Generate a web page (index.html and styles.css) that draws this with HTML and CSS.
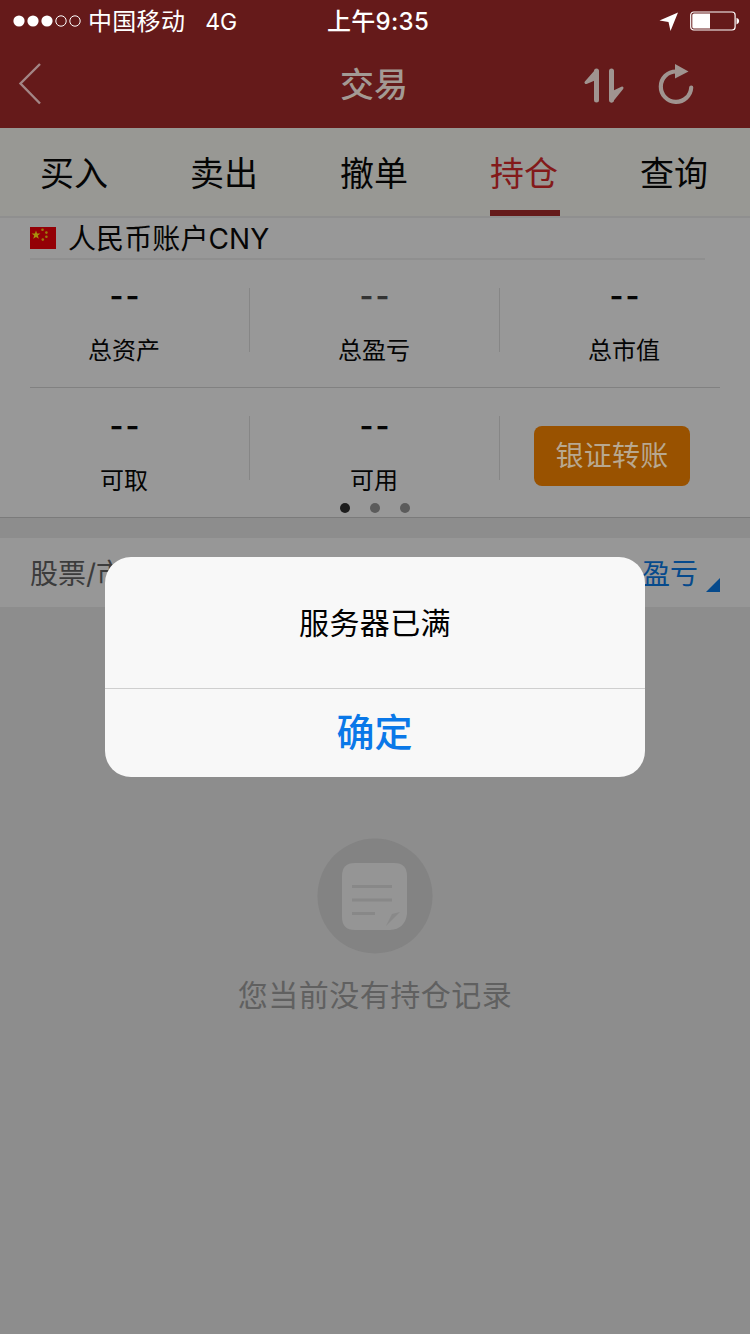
FILE: index.html
```
<!doctype html>
<html lang="zh-CN">
<head>
<meta charset="utf-8">
<meta name="viewport" content="width=device-width, initial-scale=1.0">
<title>交易</title>
<link rel="stylesheet" href="styles.css">
</head>
<body>
<div class="page">
    <header class="header">
        <div class="status">
            <div class="status-left">
                <svg width="68" height="12" viewBox="0 0 68 12">
                    <g fill="#fff"><circle cx="6" cy="6" r="5.6"/><circle cx="20" cy="6" r="5.6"/><circle cx="34" cy="6" r="5.6"/></g>
                    <g fill="none" stroke="#fff"><circle cx="48" cy="6" r="5.2"/><circle cx="62" cy="6" r="5.2"/></g>
                </svg>
                <span class="carrier">中国移动</span>
                <span class="network">4G</span>
            </div>
            <div class="status-time">上午9:35</div>
            <div class="status-right">
                <svg width="20" height="20" viewBox="0 0 20 20"><path d="M19 1.5 L0.5 9.5 L9.5 11 L11.5 20 Z" fill="#fff"/></svg>
                <svg width="50" height="20" viewBox="0 0 50 20">
                    <rect x="0.7" y="1" width="44.4" height="18" rx="3" fill="none" stroke="#fff" stroke-width="1.2"/>
                    <path d="M4 2.5 H20 V17.5 H4 Q2.3 17.5 2.3 16 V4 Q2.3 2.5 4 2.5 Z" fill="#fff"/>
                    <path d="M46.5 6.7 Q49.2 7.6 49.2 10 Q49.2 12.6 46.5 13.5 Z" fill="#fff"/>
                </svg>
            </div>
        </div>
        <div class="nav">
            <svg class="back" width="24" height="44" viewBox="0 0 24 44"><path d="M22 2 L2.5 21.5 L22 41.5" fill="none" stroke="#a38686" stroke-width="2.4"/></svg>
            <h1>交易</h1>
            <div class="nav-right">
                <svg class="swap" width="42" height="38" viewBox="0 0 42 38" fill="#a09490" stroke="#a09490" stroke-linecap="round" stroke-linejoin="round">
                    <path d="M13.5 33 V4" stroke-width="5"/>
                    <path d="M13.5 3.5 L3 15.5 L13.5 11 Z" stroke-width="3"/>
                    <path d="M28.5 4 V33" stroke-width="5"/>
                    <path d="M28.5 34 L39 21 L28.5 26 Z" stroke-width="3"/>
                </svg>
                <svg width="38" height="42" viewBox="0 0 38 42">
                    <path d="M19 8.5 A15.2 15.2 0 1 0 34.2 24.5" fill="none" stroke="#a09490" stroke-width="4.2" stroke-linecap="round"/>
                    <path d="M18 1 L31.5 8.5 L18 15.5 Z" fill="#a09490"/>
                </svg>
            </div>
        </div>
    </header>

    <nav class="tabs">
        <a>买入</a>
        <a>卖出</a>
        <a>撤单</a>
        <a class="active">持仓</a>
        <a>查询</a>
    </nav>

    <section class="account">
        <div class="account-name">
            <svg width="26" height="22" viewBox="0 0 26 22">
                <rect width="26" height="22" fill="#940006"/>
                <path d="M6 3.4 L7.1 6.6 H10.4 L7.8 8.6 L8.8 11.8 L6 9.9 L3.2 11.8 L4.2 8.6 L1.6 6.6 H4.9 Z" fill="#a8900c"/>
                <g fill="#9c7a0c"><circle cx="12.5" cy="2.8" r="1.3"/><circle cx="16.4" cy="5.6" r="1.3"/><circle cx="16.4" cy="9.8" r="1.3"/><circle cx="12.8" cy="12.6" r="1.3"/></g>
            </svg>
            <span>人民币账户CNY</span>
        </div>
        <div class="row">
            <div class="cell"><b>--</b><span>总资产</span></div>
            <div class="cell"><b class="dim">--</b><span>总盈亏</span></div>
            <div class="cell"><b>--</b><span>总市值</span></div>
        </div>
        <div class="row">
            <div class="cell"><b>--</b><span>可取</span></div>
            <div class="cell"><b>--</b><span>可用</span></div>
            <div class="cell"><a class="transfer">银证转账</a></div>
        </div>
        <div class="dots"><i class="on"></i><i></i><i></i></div>
    </section>

    <section class="list-head">
        <span>股票/市值</span>
        <span class="sort">盈亏<svg width="14" height="14" viewBox="0 0 14 14"><path d="M14 0 V14 H0 Z" fill="#064a8c"/></svg></span>
    </section>

    <section class="empty">
        <svg width="116" height="116" viewBox="0 0 116 116">
            <circle cx="58" cy="58" r="57.5" fill="#838383"/>
            <path d="M38 25 H77 Q90 25 90 38 V76 Q88 91 73 92 H38 Q25 92 25 79 V38 Q25 25 38 25 Z" fill="#959595"/>
            <path d="M35 48.5 H75 M35 62 H75 M35 75.5 H58" stroke="#888" stroke-width="3"/>
            <path d="M69 88 L75 76 L83 74 Z" fill="#898989"/>
        </svg>
        <p>您当前没有持仓记录</p>
    </section>
</div>

<div class="alert">
    <div class="alert-msg">服务器已满</div>
    <div class="alert-btn">确定</div>
</div>
</body>
</html>
```

FILE: styles.css
```
* {
    box-sizing: border-box;
}
body {
    margin: 0;
    width: 750px;
    height: 1334px;
    overflow: hidden;
    position: relative;
    background: #8d8d8d;
    color: #050505;
    font-family: Inter, "Noto Sans CJK SC", sans-serif;
}
svg {
    display: block;
    flex: none;
}
.header {
    height: 128px;
    background: #651a1a;
}
.status {
    height: 40px;
    display: grid;
    grid-template-columns: 1fr 110px 1fr;
    align-items: center;
    color: #fff;
    font-size: 24px;
    line-height: 40px;
}
.status-left {
    display: flex;
    align-items: center;
    padding-left: 13px;
}
.carrier {
    margin-left: 7px;
    padding-top: 2px;
    letter-spacing: 0.3px;
}
.network {
    margin-left: 20px;
    padding-top: 2px;
    font-size: 23px;
}
.status-time {
    padding: 2px 0 0 6px;
    font-weight: 500;
    letter-spacing: 0.3px;
    white-space: nowrap;
    text-align: center;
}
.status-right {
    display: flex;
    justify-content: flex-end;
    gap: 11px;
    padding-right: 10px;
}
.nav {
    height: 88px;
    display: grid;
    grid-template-columns: 1fr 100px 1fr;
    align-items: center;
}
.back {
    margin: 0 0 1px 18px;
}
.nav h1 {
    margin: 2px 2px 0 0;
    font-size: 34px;
    font-weight: 500;
    line-height: 50px;
    text-align: center;
    color: #a39a94;
}
.nav-right {
    display: flex;
    justify-content: flex-end;
    align-items: center;
    gap: 32px;
    padding-right: 55px;
}
.swap {
    margin-top: 4px;
}
.tabs {
    height: 90px;
    display: flex;
    background: #989894;
    border-bottom: 2px solid #8f8f8f;
}
.tabs a {
    width: 70px;
    margin: 0 40px;
    padding-right: 2px;
    font-size: 34px;
    line-height: 91px;
    text-align: center;
    white-space: nowrap;
}
.tabs .active {
    height: 88px;
    color: #831a1a;
    border-bottom: 6px solid #651a1a;
}
.account {
    position: relative;
    height: 300px;
    background: #989898;
    border-bottom: 1px solid #7b7b7b;
}
.account-name {
    height: 42px;
    margin: 0 45px 0 30px;
    display: flex;
    align-items: center;
    gap: 12px;
    font-size: 28px;
    line-height: 40px;
    border-bottom: 2px solid #8f8f8f;
}
.account-name span {
    padding-top: 2px;
    letter-spacing: 0.1px;
}
.row {
    height: 128px;
    display: flex;
}
.row + .row {
    height: 130px;
}
.row:nth-child(2) {
    background: linear-gradient(#818181, #818181) 30px 100% / 690px 1px no-repeat;
}
.cell {
    width: 250px;
    display: flex;
    flex-direction: column;
    align-items: center;
    background: linear-gradient(#868686, #868686) 100% 28px / 1px 64px no-repeat;
}
.cell:last-child {
    background: none;
}
.cell b {
    margin-top: 21px;
    padding-left: 1px;
    height: 30px;
    font-size: 30px;
    font-weight: 600;
    line-height: 30px;
    letter-spacing: 2px;
}
.row + .row b {
    margin-top: 23px;
}
.cell .dim {
    color: #333;
}
.cell span {
    margin: 22px 2px 0 0;
    font-size: 24px;
    line-height: 36px;
}
.transfer {
    width: 156px;
    height: 60px;
    margin: 38px 0 0 -26px;
    border-radius: 8px;
    background: #995200;
    color: #b8a890;
    font-size: 28px;
    line-height: 61px;
    letter-spacing: 0.2px;
    text-align: center;
}
.dots {
    position: absolute;
    left: 340px;
    top: 285px;
    display: flex;
    gap: 20px;
}
.dots i {
    width: 10px;
    height: 10px;
    border-radius: 50%;
    background: #5b5b5b;
}
.dots .on {
    background: #1c1c1c;
}
.list-head {
    height: 69px;
    margin-top: 20px;
    padding: 0 30px;
    display: flex;
    justify-content: space-between;
    background: #979797;
    color: #3c3c3c;
    font-size: 28px;
    line-height: 72px;
}
.sort {
    display: flex;
    gap: 8px;
    color: #064a8c;
}
.sort svg {
    margin-top: 40px;
}
.empty {
    padding-top: 231px;
    display: flex;
    flex-direction: column;
    align-items: center;
}
.empty p {
    margin: 19px 0 0;
    color: #606060;
    font-size: 30px;
    line-height: 44px;
    letter-spacing: 0.5px;
}
.alert {
    position: absolute;
    left: 105px;
    top: 557px;
    width: 540px;
    height: 220px;
    border-radius: 26px;
    background: #f8f8f8;
    text-align: center;
}
.alert-msg {
    height: 132px;
    border-bottom: 1px solid #cfcfcf;
    color: #000;
    font-size: 30px;
    line-height: 133px;
    letter-spacing: 0.4px;
}
.alert-btn {
    padding-right: 1px;
    color: #0a78e8;
    font-size: 38px;
    font-weight: 500;
    line-height: 87px;
}
```
